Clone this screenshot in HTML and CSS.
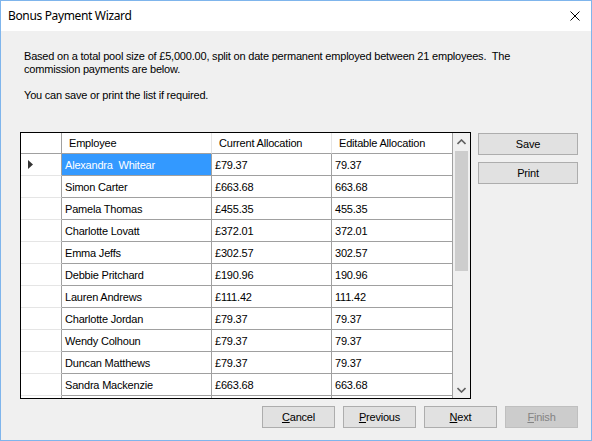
FILE: index.html
```html
<!DOCTYPE html>
<html>
<head>
<meta charset="utf-8">
<link rel="stylesheet" href="styles.css">
</head>
<body>
<div class="window">
  <div class="titlebar">
    <span class="title">Bonus Payment Wizard</span>
    <svg class="close" width="10" height="10" viewBox="0 0 10 10"><path d="M0.5 0.5 L9.5 9.5 M9.5 0.5 L0.5 9.5" stroke="#000" stroke-width="1" fill="none"/></svg>
  </div>
  <div class="client">
    <div class="intro">
      <p>Based on a total pool size of £5,000.00, split on date permanent employed between 21 employees.&nbsp; The<br>commission payments are below.</p>
      <p class="gap">You can save or print the list if required.</p>
    </div>
    <div class="main">
      <div class="grid">
        <div class="table">
          <div class="row head">
            <div class="cell rh"></div>
            <div class="cell">Employee</div>
            <div class="cell">Current Allocation</div>
            <div class="cell">Editable Allocation</div>
          </div>
          <div class="row">
            <div class="cell rh"><svg width="5" height="9" viewBox="0 0 5 9"><polygon points="0,0 5,4.5 0,9" fill="#333"/></svg></div>
            <div class="cell sel">Alexandra&nbsp; Whitear</div>
            <div class="cell">£79.37</div>
            <div class="cell">79.37</div>
          </div>
          <div class="row"><div class="cell rh"></div><div class="cell">Simon Carter</div><div class="cell">£663.68</div><div class="cell">663.68</div></div>
          <div class="row"><div class="cell rh"></div><div class="cell">Pamela Thomas</div><div class="cell">£455.35</div><div class="cell">455.35</div></div>
          <div class="row"><div class="cell rh"></div><div class="cell">Charlotte Lovatt</div><div class="cell">£372.01</div><div class="cell">372.01</div></div>
          <div class="row"><div class="cell rh"></div><div class="cell">Emma Jeffs</div><div class="cell">£302.57</div><div class="cell">302.57</div></div>
          <div class="row"><div class="cell rh"></div><div class="cell">Debbie Pritchard</div><div class="cell">£190.96</div><div class="cell">190.96</div></div>
          <div class="row"><div class="cell rh"></div><div class="cell">Lauren Andrews</div><div class="cell">£111.42</div><div class="cell">111.42</div></div>
          <div class="row"><div class="cell rh"></div><div class="cell">Charlotte Jordan</div><div class="cell">£79.37</div><div class="cell">79.37</div></div>
          <div class="row"><div class="cell rh"></div><div class="cell">Wendy Colhoun</div><div class="cell">£79.37</div><div class="cell">79.37</div></div>
          <div class="row"><div class="cell rh"></div><div class="cell">Duncan Matthews</div><div class="cell">£79.37</div><div class="cell">79.37</div></div>
          <div class="row"><div class="cell rh"></div><div class="cell">Sandra Mackenzie</div><div class="cell">£663.68</div><div class="cell">663.68</div></div>
          <div class="row"><div class="cell rh"></div><div class="cell"></div><div class="cell"></div><div class="cell"></div></div>
        </div>
        <div class="scrollbar">
          <div class="arrow"><svg width="9" height="6" viewBox="0 0 9 6"><path d="M0.5 5 L4.5 1 L8.5 5" stroke="#606060" stroke-width="1.6" fill="none"/></svg></div>
          <div class="track"><div class="thumb"></div></div>
          <div class="arrow"><svg width="9" height="6" viewBox="0 0 9 6"><path d="M0.5 1 L4.5 5 L8.5 1" stroke="#606060" stroke-width="1.6" fill="none"/></svg></div>
        </div>
      </div>
      <div class="side">
        <div class="btn">Save</div>
        <div class="btn">Print</div>
      </div>
    </div>
    <div class="footer">
      <div class="btn"><u>C</u>ancel</div>
      <div class="btn"><u>P</u>revious</div>
      <div class="btn"><u>N</u>ext</div>
      <div class="btn disabled"><u>F</u>inish</div>
    </div>
  </div>
</div>
</body>
</html>
```

FILE: styles.css
```css
html, body {
  margin: 0;
  padding: 0;
}
body {
  width: 592px;
  height: 441px;
  overflow: hidden;
  font-family: "Liberation Sans", Arial, sans-serif;
  font-size: 11px;
  letter-spacing: -0.2px;
  color: #000;
}
.window {
  width: 592px;
  height: 441px;
  box-sizing: border-box;
  border: 1px solid #7fb5ec;
  display: flex;
  flex-direction: column;
  background: #f0f0f0;
}
.titlebar {
  height: 30px;
  flex: none;
  background: #fff;
  display: flex;
  align-items: center;
  justify-content: space-between;
  padding: 0 10px 0 7px;
}
.title {
  font-family: "Noto Sans", "Open Sans", sans-serif;
  font-size: 12px;
  letter-spacing: -0.35px;
  margin-top: -1px;
}
.close {
  display: block;
  margin-right: 1px;
}
.client {
  flex: 1;
  padding: 19px 13px 0 19px;
  display: flex;
  flex-direction: column;
}
.intro {
  padding-left: 4px;
  height: 39px;
  line-height: 13px;
}
.intro p {
  margin: 0;
}
.intro p.gap {
  margin-top: 13px;
}
.main {
  margin-top: 43px;
  display: flex;
  gap: 7px;
  align-items: flex-start;
}
.grid {
  width: 451px;
  height: 267px;
  box-sizing: border-box;
  border: 1px solid #000;
  display: flex;
  background: #fff;
}
.table {
  width: 432px;
  height: 265px;
  overflow: hidden;
}
.row {
  display: grid;
  grid-template-columns: 41px 150px 120px 121px;
  height: 22px;
}
.row.head {
  height: 21px;
}
.cell {
  box-sizing: border-box;
  border-right: 1px solid #a0a0a0;
  border-bottom: 1px solid #a0a0a0;
  padding-left: 3px;
  display: flex;
  align-items: center;
  white-space: nowrap;
  overflow: hidden;
}
.head .cell {
  padding-left: 7px;
  border-right-color: #e5e5e5;
}
.head .cell:last-child {
  border-right-color: #a0a0a0;
}
.cell.rh {
  border-bottom-color: #e5e5e5;
  padding-left: 7px;
}
.head .cell.rh {
  border-bottom-color: #a0a0a0;
  border-right-color: #a0a0a0;
}
.cell.rh svg {
  display: block;
}
.cell.sel {
  background: #3399ff;
  color: #fff;
}
.scrollbar {
  width: 17px;
  height: 265px;
  background: #f0f0f0;
  display: flex;
  flex-direction: column;
}
.arrow {
  height: 17px;
  flex: none;
  display: flex;
  align-items: center;
  justify-content: center;
}
.track {
  flex: 1;
  padding: 1px 2px;
}
.thumb {
  height: 120px;
  background: #cdcdcd;
}
.side {
  display: flex;
  flex-direction: column;
  gap: 7px;
  padding-top: 1px;
}
.btn {
  width: 100px;
  height: 22px;
  box-sizing: border-box;
  border: 1px solid #adadad;
  background: #e1e1e1;
  display: flex;
  align-items: center;
  justify-content: center;
}
.footer {
  margin-top: 7px;
  display: flex;
  justify-content: flex-end;
  gap: 8px;
}
.footer .btn {
  width: 73px;
}
.btn.disabled {
  background: #cccccc;
  border-color: #bfbfbf;
  color: #838383;
}
```
